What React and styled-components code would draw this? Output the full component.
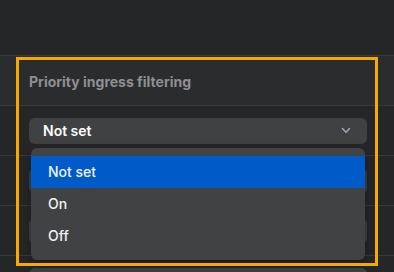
import styled, { createGlobalStyle } from "styled-components";

const GlobalStyle = createGlobalStyle`
  html, body {
    margin: 0;
    padding: 0;
    background: #252628;
    font-family: Inter, "Noto Sans", sans-serif;
    -webkit-font-smoothing: antialiased;
  }
`;

const Page = styled.div`
  width: 394px;
  height: 272px;
  overflow: hidden;
  padding-top: 55px;
  box-sizing: border-box;
`;

const Table = styled.div`
  position: relative;
  border-top: 1px solid #38393b;
`;

const Row = styled.div`
  display: flex;
  align-items: center;
  height: 49px;
  padding: 0 27px 0 29px;
  border-bottom: 1px solid #38393b;
  background: ${(p) => (p.$header ? "#2b2c2e" : "transparent")};
`;

const Title = styled.span`
  padding-top: 2px;
  font-size: 14px;
  font-weight: 700;
  color: #8e8f92;
`;

const SelectWrap = styled.div`
  position: relative;
  flex: 1;
`;

const SelectBox = styled.div`
  display: flex;
  align-items: center;
  justify-content: space-between;
  height: 26px;
  padding: 0 17px 0 14px;
  border-radius: 6px;
  background: #404143;
  color: #ffffff;
  font-size: 14px;
  font-weight: 600;
`;

const Chevron = styled.svg`
  width: 8px;
  height: 5px;
  overflow: visible;
`;

const Menu = styled.ul`
  position: absolute;
  z-index: 2;
  top: 30px;
  left: 2px;
  right: 2px;
  margin: 0;
  padding: 8px 0;
  list-style: none;
  border-radius: 6px;
  background: #414244;
  box-shadow: 0 4px 12px rgba(0, 0, 0, 0.35);
`;

const MenuItem = styled.li`
  display: flex;
  align-items: center;
  height: 32px;
  padding: 0 17px;
  font-size: 14px;
  font-weight: 500;
  color: #f2f2f2;
  background: ${(p) => (p.$active ? "#005bc8" : "transparent")};
`;

const Highlight = styled.div`
  position: absolute;
  z-index: 3;
  top: 1px;
  left: 16px;
  width: 362px;
  height: 209px;
  box-sizing: border-box;
  border: 3px solid #f7a900;
  pointer-events: none;
`;

const Select = ({ value, open, options }) => (
  <SelectWrap>
    <SelectBox>
      <span>{value}</span>
      <Chevron viewBox="0 0 8 5">
        <polyline
          points="0.5,0.5 4,4.2 7.5,0.5"
          fill="none"
          stroke="#9ea8b8"
          strokeWidth="1.5"
          strokeLinecap="round"
          strokeLinejoin="round"
        />
      </Chevron>
    </SelectBox>
    {open && (
      <Menu>
        {options.map((o) => (
          <MenuItem key={o} $active={o === value}>
            {o}
          </MenuItem>
        ))}
      </Menu>
    )}
  </SelectWrap>
);

const options = ["Not set", "On", "Off"];

export default function App() {
  return (
    <Page>
      <GlobalStyle />
      <Table>
        <Row $header>
          <Title>Priority ingress filtering</Title>
        </Row>
        <Row>
          <Select value="Not set" open options={options} />
        </Row>
        {/* rows hidden under the open menu */}
        <Row>
          <Select value="" options={options} />
        </Row>
        <Row>
          <Select value="" options={options} />
        </Row>
        <Row>
          <Select value="" options={options} />
        </Row>
        <Highlight />
      </Table>
    </Page>
  );
}
